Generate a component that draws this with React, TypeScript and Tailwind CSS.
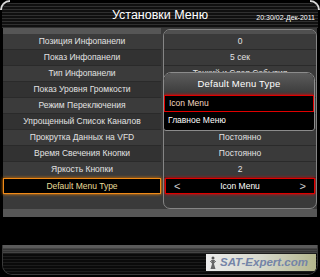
import React from 'react';

const rows = [
  { label: 'Позиция Инфопанели', value: '0' },
  { label: 'Показ Инфопанели', value: '5 сек' },
  { label: 'Тип Инфопанели', value: 'Тонкий и Слоя События' },
  { label: 'Показ Уровня Громкости', value: '' },
  { label: 'Режим Переключения', value: '' },
  { label: 'Упрощенный Список Каналов', value: '' },
  { label: 'Прокрутка Данных на VFD', value: 'Постоянно' },
  { label: 'Время Свечения Кнопки', value: 'Постоянно' },
  { label: 'Яркость Кнопки', value: '2' },
];

const App = () => {
  return (
    <div className="relative w-[320px] h-[277px] bg-black overflow-hidden font-['Liberation_Sans',Arial,sans-serif] text-[#e2e2e2]">
      {/* frame corners */}
      <div className="absolute left-0 top-0 w-[10px] h-[10px] rounded-tl-[10px] border-l-2 border-t-2 border-[#d8d8d8]" />
      <div className="absolute right-0 top-0 w-[10px] h-[10px] rounded-tr-[10px] border-r-2 border-t-2 border-[#d8d8d8]" />

      {/* header */}
      <div className="mx-[2px] mt-[3px] h-[25px] rounded-t-[8px] grid grid-cols-[1fr_auto_1fr] items-center bg-[repeating-linear-gradient(to_bottom,#303030_0px,#303030_1px,#101010_1px,#101010_3px)]">
        <div />
        <div className="text-[12.5px] text-white leading-none">Установки Меню</div>
        <div className="justify-self-end pr-[3px] pt-[4px] text-[7px] text-white leading-none">20:30/02-Дек-2011</div>
      </div>

      {/* body */}
      <div className="relative mx-[3px] flex h-[181px] bg-[#3a3a3a]">
        <div className="w-[158px] flex flex-col">
          <div className="h-[6px] bg-[#565656]" />
          {rows.map((r, i) => (
            <div
              key={r.label}
              className={`h-[16px] flex items-center justify-center text-[8.5px] border-b border-[#2a2a2a] ${i % 2 === 1 ? 'bg-[#323232]' : 'bg-[#3b3b3b]'}`}
            >
              {r.label}
            </div>
          ))}
          <div className="h-[16px] flex items-center justify-center text-[8.5px] bg-black border border-[#f08a18] shadow-[0_0_3px_#ff8a00] text-[#e8dc98]">
            Default Menu Type
          </div>
        </div>

        <div className="ml-[2px] mt-[1px] flex-1 rounded-[7px] border border-[#858585] flex flex-col overflow-hidden">
          <div className="h-[4px] bg-[#505050]" />
          {rows.map(r => (
            <div key={r.label} className="h-[16px] flex items-center justify-center text-[8.5px] border-b border-[#2a2a2a] bg-[#3a3a3a] whitespace-nowrap overflow-hidden">
              {r.value}
            </div>
          ))}
          <div className="mx-[1px] h-[16px] flex items-center justify-between px-[8px] text-[8.5px] text-white bg-black border border-[#e00000] shadow-[0_0_3px_#ff0000]">
            <span className="text-[11px] text-[#d0d0d0]">&lt;</span>
            <span>Icon Menu</span>
            <span className="text-[11px] text-[#d0d0d0]">&gt;</span>
          </div>
        </div>

        {/* popup */}
        <div className="absolute left-[160px] top-[44px] w-[152px] h-[59px] rounded-t-[8px] rounded-b-[3px] border border-[#8c8c8c] bg-black overflow-hidden flex flex-col">
          <div className="h-[22px] flex items-center justify-center text-[9.5px] text-white bg-gradient-to-b from-[#5c5c5c] to-[#3a3a3a] tracking-[0.2px]">
            Default Menu Type
          </div>
          <div className="h-[17px] flex items-center pl-[4px] text-[8.5px] text-[#f4d8c0] bg-black border border-[#e00000] shadow-[0_0_3px_#ff0000]">
            Icon Menu
          </div>
          <div className="h-[16px] flex items-center pl-[4px] text-[8.5px] text-white bg-black">
            Главное Меню
          </div>
        </div>
      </div>

      <div className="mx-[3px] h-[8px] bg-[#575757]" />
      <div className="h-[28px]" />

      {/* footer */}
      <div className="mx-[2px] h-[30px] rounded-b-[10px] border-x border-b border-[#3a3a3a] flex flex-col overflow-hidden">
        <div className="h-[3px] bg-[#5a5a5a]" />
        <div className="h-[5px] bg-[repeating-linear-gradient(to_bottom,#444_0px,#444_1px,#333_1px,#333_2px)]" />
        <div className="flex-1 flex justify-end items-end pr-[1px] pb-[3px] bg-[repeating-linear-gradient(to_bottom,#1c1c1c_0px,#1c1c1c_1px,#0a0a0a_1px,#0a0a0a_3px)]">
          <div className="w-[110px] h-[17px] flex items-center gap-[3px] pl-[3px] bg-gradient-to-r from-[#ececec] via-[#d6d8cc] to-[#b4b68c] whitespace-nowrap">
            <svg width="8" height="14" viewBox="0 0 8 14" className="shrink-0">
              <circle cx="4" cy="2" r="1.5" fill="#555" />
              <path d="M2 4h4l-1 4 1.5 5h-5L3 8z" fill="#666" />
              <path d="M1 5l2 2M7 5L5 7" stroke="#777" strokeWidth="1" />
            </svg>
            <span className="text-[11.5px] font-bold italic text-[#7484a8] leading-none">SAT-Expert.com</span>
          </div>
        </div>
      </div>
    </div>
  );
};

export default App;
